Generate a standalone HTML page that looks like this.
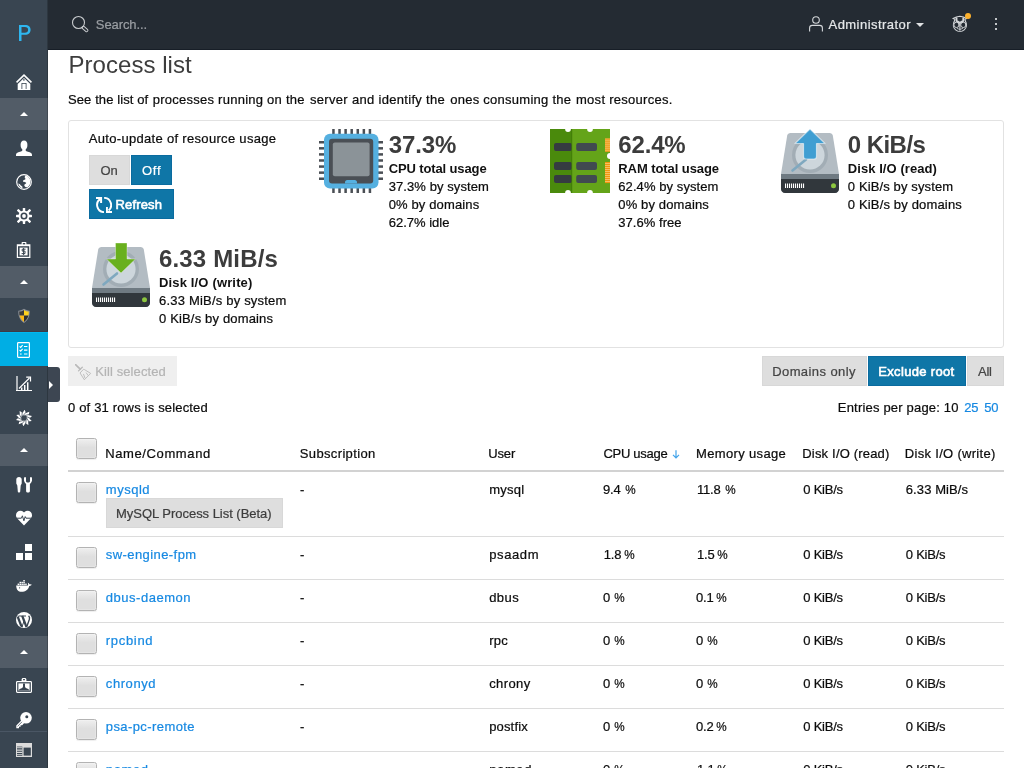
<!DOCTYPE html>
<html><head><meta charset="utf-8"><title>Process list</title><style>
*{margin:0;padding:0;box-sizing:border-box}
html,body{width:1024px;height:768px;overflow:hidden;background:#fff;font-family:"Liberation Sans",sans-serif;font-size:13px;color:#0c0c0c}
.a{position:absolute}
.t{position:absolute;white-space:nowrap;}
#tx{position:absolute;left:0;top:0;width:1024px;height:768px;will-change:transform;transform:translateZ(0)}
#side{position:absolute;left:0;top:0;width:48px;height:768px;background:#394551;}
.gh{position:absolute;left:0;width:48px;height:32px;background:#525c67}
.bg{position:absolute;height:30px;background:#dedede;border:1px solid #d8d8d8}
.bb{position:absolute;height:30px;background:#0f76a7;border:1px solid #0a6b9f}
#head{position:absolute;left:48px;top:0;width:976px;height:50px;background:#242b33;border-bottom:1px solid #171e27}
.cb{position:absolute;left:76px;width:21px;height:21px;border:1px solid #b3b3b3;border-radius:2.5px;background:linear-gradient(#efefef 0%,#dfdfdf 45%,#dfdfdf 100%);box-shadow:inset 0 0 0 1px rgba(255,255,255,.2),0 1px 1px rgba(0,0,0,.07)}
.rl{position:absolute;left:68px;width:936px;height:1px;background:#dcdcdc}
</style></head><body>
<div id="side"></div>
<div class="gh" style="top:98px"></div>
<svg style="position:absolute;left:20px;top:112px" width="8" height="4" viewBox="0 0 8 4" ><path d="M4 0L8 4H0Z" fill="#fff"/></svg>
<div class="gh" style="top:266px"></div>
<svg style="position:absolute;left:20px;top:280px" width="8" height="4" viewBox="0 0 8 4" ><path d="M4 0L8 4H0Z" fill="#fff"/></svg>
<div class="gh" style="top:434px"></div>
<svg style="position:absolute;left:20px;top:448px" width="8" height="4" viewBox="0 0 8 4" ><path d="M4 0L8 4H0Z" fill="#fff"/></svg>
<div class="gh" style="top:636px"></div>
<svg style="position:absolute;left:20px;top:650px" width="8" height="4" viewBox="0 0 8 4" ><path d="M4 0L8 4H0Z" fill="#fff"/></svg>
<div class="a" style="left:47px;top:0;width:1px;height:768px;background:rgba(0,0,0,.2)"></div>
<div class="a" style="left:0;top:331px;width:48px;height:1px;background:#3c3b46"></div>
<div class="a" style="left:0;top:332px;width:48px;height:34px;background:#00aee4;border-top:1px solid #00b8f0"></div>
<div class="a" style="left:0;top:731px;width:47px;height:1px;background:#4a5664"></div>
<svg style="position:absolute;left:16px;top:74px" width="16" height="16" viewBox="0 0 16 16" ><path d="M8 0L0 7.800L1.100 9L8 2.300L14.900 9L16 7.800Z" fill="#fff"/><path d="M8 3.900L1.700 10V16H14.300V10Z" fill="#fff"/><rect x="5.500" y="9" width="5" height="6" fill="#394551"/><rect x="6.300" y="9.800" width="3.400" height="5.200" fill="#fff"/><circle cx="7.900" cy="5.900" r=".8" fill="#394551"/></svg>
<svg style="position:absolute;left:16px;top:140px" width="16" height="16" viewBox="0 0 16 16" ><ellipse cx="8" cy="5" rx="3.4" ry="4.6" fill="#fff"/><path d="M6.3 8h3.4v2.2c0 .6 .5 1 1.4 1.3l2.6 .8c1.4 .4 2.3 1.3 2.3 2.6v1.1H0v-1.1c0-1.3 .9-2.2 2.3-2.6l2.6-.8c.9-.3 1.4-.7 1.400-1.300z" fill="#fff"/></svg>
<svg style="position:absolute;left:16px;top:174px" width="16" height="16" viewBox="0 0 16 16" ><circle cx="8" cy="8" r="7.3" fill="none" stroke="#fff" stroke-width="1.2"/><path d="M9.6 1.6c2.800 .7 4.800 3.200 4.800 6.200c0 2.300-1.200 4.300-3 5.400c-1.200 .2-2.400-.3-2.900-1.300c-.4-.9 0-1.700 .8-2c1-.4 1.200-1 .5-1.400c-.7-.4-2-.1-2.600-.900c-.5-.7-.1-1.500 .8-1.700c.9-.2 1.500-.5 1.400-1.200c-.1-.6-.7-.8-.7-1.500c0-.7 .4-1.200 .9-1.600z" fill="#fff"/><path d="M2.200 9.600c.9 .1 1.800 .5 2.200 1.300c.4 .8 1.400 .9 1.900 1.600c.4 .6 .2 1.400-.4 1.700c-1.800-.8-3.200-2.500-3.700-4.600z" fill="#fff"/></svg>
<svg style="position:absolute;left:16px;top:208px" width="16" height="16" viewBox="0 0 16 16" ><rect x="6.8" y="0" width="2.4" height="4" rx="0.6" fill="#fff" transform="rotate(0.0 8 8)"/><rect x="6.8" y="0" width="2.4" height="4" rx="0.6" fill="#fff" transform="rotate(90.0 8 8)"/><rect x="6.8" y="0" width="2.4" height="4" rx="0.6" fill="#fff" transform="rotate(180.0 8 8)"/><rect x="6.8" y="0" width="2.4" height="4" rx="0.6" fill="#fff" transform="rotate(270.0 8 8)"/><rect x="6.8" y="-1" width="2.4" height="5" rx="0.6" fill="#fff" transform="rotate(45.0 8 8)"/><rect x="6.8" y="-1" width="2.4" height="5" rx="0.6" fill="#fff" transform="rotate(135.0 8 8)"/><rect x="6.8" y="-1" width="2.4" height="5" rx="0.6" fill="#fff" transform="rotate(225.0 8 8)"/><rect x="6.8" y="-1" width="2.4" height="5" rx="0.6" fill="#fff" transform="rotate(315.0 8 8)"/><circle cx="8" cy="8" r="4.500" fill="none" stroke="#fff" stroke-width="2"/><circle cx="8" cy="8" r="1.900" fill="#fff"/></svg>
<svg style="position:absolute;left:16px;top:242px" width="16" height="16" viewBox="0 0 16 16" ><path d="M.8 2.200h4.800V.8a.8 .8 0 0 1 .8-.8h3.200a.8 .8 0 0 1 .8 .8v1.400H14.400V16H.8z" fill="#fff"/><rect x="6.800" y="1" width="2.400" height="1.400" fill="#394551"/><rect x="2" y="4.200" width="11.200" height="10.600" fill="#394551"/><rect x="3.600" y="5.600" width="8" height="7.800" fill="#fff"/><path d="M9.600 7.200H6.200v1.900h2.800v2.500H5.600M7.600 6v7" stroke="#394551" stroke-width="1" fill="none"/></svg>
<svg style="position:absolute;left:17px;top:308px" width="14" height="16" viewBox="0 0 14 16" ><path d="M7 .8C5.400 2 3.400 2.600 1.300 2.700C1 7.500 2.600 12 7 15C11.400 12 13 7.500 12.700 2.700C10.600 2.600 8.600 2 7 .8z" fill="#8a8f96"/><clipPath id="shc"><path d="M7 1.900C5.600 2.900 3.900 3.500 2.200 3.600C2 7.600 3.400 11.300 7 13.900C10.600 11.300 12 7.600 11.800 3.600C10.100 3.500 8.400 2.900 7 1.900z"/></clipPath><g clip-path="url(#shc)"><rect x="0" y="0" width="7" height="7.600" fill="#3b3b3b"/><rect x="7" y="0" width="7" height="7.600" fill="#ffd21c"/><rect x="0" y="7.600" width="7" height="9" fill="#fdb813"/><rect x="7" y="7.600" width="7" height="9" fill="#2e2e2e"/></g></svg>
<svg style="position:absolute;left:17px;top:342px" width="13" height="16" viewBox="0 0 13 16" ><rect x=".6" y=".6" width="11.800" height="14.800" rx=".8" fill="none" stroke="#fff" stroke-width="1.200"/><path d="M2.600 4.300l1.100 1.100l1.900-2.200M2.600 8l1.100 1.100l1.900-2.200" stroke="#fff" stroke-width="1.100" fill="none"/><path d="M7 4.500h3.400M7 8.200h3.400M7 12h3.400" stroke="#fff" stroke-width="1.200"/><rect x="3.200" y="11.400" width="1.300" height="1.300" fill="#fff"/></svg>
<svg style="position:absolute;left:16px;top:376px" width="16" height="16" viewBox="0 0 16 16" ><path d="M1 0v14.500M0 14.500h16" stroke="#fff" stroke-width="1.200" fill="none"/><path d="M3 12.500L13.500 2" stroke="#fff" stroke-width="1.200"/><path d="M10.200 1.200h4.300v4.300" stroke="#fff" stroke-width="1.200" fill="none"/><path d="M5.700 11.600v2.400M8.700 9v5M11.700 6.200v7.800" stroke="#fff" stroke-width="1.500"/></svg>
<svg style="position:absolute;left:16px;top:410px" width="16" height="16" viewBox="0 0 16 16" ><path d="M8.58,-0.28L10.02,2.99L13.34,1.64L12.58,5.14L16.05,5.99L13.39,8.38L15.70,11.11L12.14,11.47L12.40,15.04L9.31,13.24L7.42,16.28L5.98,13.01L2.66,14.36L3.42,10.86L-0.05,10.01L2.61,7.62L0.30,4.89L3.86,4.53L3.60,0.96L6.69,2.76Z" fill="#fff"/><path d="M10.60 8.00L13.04 11.94" stroke="#394551" stroke-width=".7"/><path d="M10.10 9.53L9.76 14.15" stroke="#394551" stroke-width=".7"/><path d="M8.80 10.47L5.81 14.01" stroke="#394551" stroke-width=".7"/><path d="M7.20 10.47L2.69 11.58" stroke="#394551" stroke-width=".7"/><path d="M5.90 9.53L1.60 7.78" stroke="#394551" stroke-width=".7"/><path d="M5.40 8.00L2.96 4.06" stroke="#394551" stroke-width=".7"/><path d="M5.90 6.47L6.24 1.85" stroke="#394551" stroke-width=".7"/><path d="M7.20 5.53L10.19 1.99" stroke="#394551" stroke-width=".7"/><path d="M8.80 5.53L13.31 4.42" stroke="#394551" stroke-width=".7"/><path d="M10.10 6.47L14.40 8.22" stroke="#394551" stroke-width=".7"/><circle cx="8" cy="8" r="2.800" fill="#394551"/></svg>
<svg style="position:absolute;left:16px;top:477px" width="16" height="16" viewBox="0 0 16 16" ><path d="M.300 2.600C.300 1 1.400 0 3 0S5.700 1 5.700 2.600V6.500L4.700 8.500L4.200 14.500C4.100 15.300 3.700 15.600 3 15.600S1.900 15.300 1.800 14.500L1.300 8.500L.300 6.500z" fill="#fff"/><path d="M8.200 .300C8.200 .300 10 .2 10 .300V4.200C10 5 10.800 5.600 12 5.600S14 5 14 4.200V.300C14 .2 15.800 .300 15.800 .300C16.100 1.500 16.200 3 15.800 4.300C15.500 5.500 14.800 6.400 13.900 7V14C13.900 15 13.100 15.600 12 15.600S10.100 15 10.100 14V7C9.200 6.400 8.500 5.500 8.200 4.300C7.800 3 7.900 1.500 8.200 .300z" fill="#fff"/></svg>
<svg style="position:absolute;left:16px;top:510px" width="16" height="16" viewBox="0 0 16 16" ><path d="M8 15.500L1.300 8.600C-.5 6.700-.4 3.700 1.300 2C3 .300 5.800 .300 7.500 2L8 2.600L8.500 2C10.200 .300 13 .300 14.700 2C16.400 3.700 16.500 6.700 14.700 8.600z" fill="#fff"/><path d="M0 8.200h5.400l1-2.400l1.500 5l1.300-4.200l.8 1.600H16" stroke="#394551" stroke-width="1" fill="none" stroke-linejoin="round"/></svg>
<svg style="position:absolute;left:16px;top:544px" width="16" height="16" viewBox="0 0 16 16" ><rect x="9" y="0" width="7" height="7" fill="#fff"/><rect x="0" y="9" width="7" height="7" fill="#fff"/><rect x="9" y="9" width="7" height="7" fill="#fff"/></svg>
<svg style="position:absolute;left:16px;top:580px" width="16" height="12" viewBox="0 0 16 12" ><path d="M.200 5.400H11.900C12.300 4.500 12.200 3.500 11.800 2.700C12.600 2.900 13.200 3.500 13.400 4.300C14.300 4.100 15.200 4.200 15.900 4.800C15.300 5.600 14.300 6 13.300 5.900C12.400 9.600 9.400 11.800 5.500 11.800C2.300 11.800 .300 9.700 .200 5.400z" fill="#fff"/><g fill="#fff"><rect x="1.600" y="3.600" width="1.500" height="1.400"/><rect x="3.500" y="3.600" width="1.500" height="1.400"/><rect x="5.400" y="3.600" width="1.500" height="1.400"/><rect x="7.300" y="3.600" width="1.500" height="1.400"/><rect x="9.200" y="3.600" width="1.500" height="1.400"/><rect x="3.500" y="1.800" width="1.500" height="1.400"/><rect x="5.400" y="1.800" width="1.500" height="1.400"/><rect x="7.300" y="1.800" width="1.500" height="1.400"/><rect x="7.300" y="0" width="1.500" height="1.400"/></g><circle cx="3.600" cy="7.800" r=".6" fill="#394551"/></svg>
<svg style="position:absolute;left:16px;top:612px" width="16" height="16" viewBox="0 0 16 16" ><circle cx="8" cy="8" r="8" fill="#fff"/><clipPath id="wpc"><circle cx="8" cy="8" r="7.600"/></clipPath><g clip-path="url(#wpc)" stroke="#394551" fill="none" stroke-linecap="butt"><path d="M1.600 4.400L6 15.800" stroke-width="2.300"/><path d="M5.900 15L8.300 8.400" stroke-width="1"/><path d="M6.200 3.900L10.800 15.800" stroke-width="2.300"/><path d="M10.700 15L13.400 7.200C13.900 5.600 13.400 4.600 12.600 3.800" stroke-width="1.400"/><path d="M2.400 4H10" stroke-width="1.200"/></g></svg>
<svg style="position:absolute;left:16px;top:678px" width="16" height="16" viewBox="0 0 16 16" ><path d="M5.600 3V1.600C5.600 .7 6.300 0 7.200 0h1.600c.9 0 1.600 .7 1.600 1.600V3H14.600C15.400 3 16 3.600 16 4.400V13.600C16 14.400 15.400 15 14.600 15H1.400C.6 15 0 14.400 0 13.600V4.400C0 3.600 .6 3 1.400 3z" fill="#fff"/><rect x="7" y="1.100" width="2" height="1.200" rx=".5" fill="#394551"/><rect x="1.200" y="4.200" width="13.600" height="9.600" fill="#394551"/><rect x="2.400" y="5.400" width="11.200" height="7.200" fill="#fff"/><path d="M7 5.400h2v3.200c0 .6 .3 1 .9 1.300l2.300 1.100c.5 .2 .8 .6 .8 1.100v.5H3v-.5c0-.5 .3-.9 .8-1.100l2.300-1.100c.6-.3 .9-.7 .9-1.300z" fill="#394551"/></svg>
<svg style="position:absolute;left:16px;top:712px" width="16" height="17" viewBox="0 0 16 17" ><circle cx="10" cy="5.800" r="5.800" fill="#fff"/><path d="M6.200 7.400L.300 13.600V16.200H3V14.800H4.600V13.200H6.200L8.600 10.600z" fill="#fff"/><circle cx="10.800" cy="4.800" r="1.500" fill="#394551"/><path d="M1.600 14.400L6 9.800" stroke="#394551" stroke-width=".7"/></svg>
<svg style="position:absolute;left:16px;top:743px" width="16" height="14" viewBox="0 0 16 14" ><rect x="0" y="0" width="16" height="14" fill="#dcdcdc"/><rect x="1" y="3.600" width="5.300" height="9.400" fill="#394551"/><rect x="7.600" y="4.600" width="7.200" height="8" fill="#394551"/><path d="M1 4.800h5.300M1 7.100h5.300M1 9.400h5.300M1 11.700h5.300" stroke="#dcdcdc" stroke-width="1.100"/></svg>
<svg style="position:absolute;left:18.8px;top:25px" width="12" height="16" viewBox="0 0 12 16" ><path fill-rule="evenodd" fill="#2eb6ef" d="M0 0H6.100C9.600 0 11.600 1.800 11.600 4.800C11.600 7.900 9.500 9.800 6.100 9.800H2.500V16H0zM2.500 2.100V7.700H5.800C8 7.700 9.100 6.700 9.100 4.800C9.100 3 8 2.100 5.800 2.100z"/></svg>
<div class="a" style="left:48px;top:367px;width:12px;height:35px;background:#3d4652;border-radius:0 3px 3px 0"></div>
<svg style="position:absolute;left:49px;top:381px" width="4" height="8" viewBox="0 0 4 8" ><path d="M0 0L4 4L0 8Z" fill="#fff"/></svg>
<div id="head"></div>
<svg style="position:absolute;left:71px;top:15px" width="18" height="18" viewBox="0 0 18 18" ><circle cx="7.500" cy="7.500" r="6" fill="none" stroke="#c8cbce" stroke-width="1.100"/><rect x="-3.400" y="-1.300" width="6.800" height="2.600" rx="1.300" fill="none" stroke="#c8cbce" stroke-width="1" transform="translate(14 14) rotate(42)"/></svg>
<svg style="position:absolute;left:809px;top:16px" width="14" height="16" viewBox="0 0 14 16" ><circle cx="7" cy="4" r="3.300" fill="none" stroke="#d4d7da" stroke-width="1.100"/><path d="M.6 15.500V12C.6 10.500 1.800 9.400 3.300 9.400H10.700C12.200 9.400 13.400 10.500 13.400 12V15.500" fill="none" stroke="#d4d7da" stroke-width="1.100"/></svg>
<svg style="position:absolute;left:916px;top:23px" width="8" height="4" viewBox="0 0 8 4" ><path d="M0 0H8L4 4Z" fill="#e0e2e4"/></svg>
<svg style="position:absolute;left:952px;top:15px" width="17" height="18" viewBox="0 0 17 18" ><g fill="none" stroke="#d2d5d8" stroke-width="1.100" stroke-linejoin="round" stroke-linecap="round"><path d="M1.100 3.500Q4.200 1.700 7.900 1.300Q11.600 1.700 14.700 3.500"/><path d="M1.100 3.500L2.900 4.300L2.300 6.400A6.600 6.600 0 1 0 13.500 6.400L12.900 4.300L14.700 3.500"/><path d="M4.500 3.100V5.900L7.900 7.900L11.300 5.900V3.100" stroke-width="1.900"/><circle cx="4.500" cy="9.900" r="2.650" stroke-width="1"/><circle cx="11.350" cy="9.900" r="2.650" stroke-width="1"/><path d="M7.900 7.700V15.200"/><path d="M5.200 13.600Q7.900 15.600 10.600 13.600" stroke-width=".8"/></g></svg>
<div class="a" style="left:965px;top:13px;width:6px;height:6px;border-radius:3px;background:#fbb02d"></div>
<div class="a" style="left:995px;top:18px;width:2px;height:2px;background:#c4c7ca"></div>
<div class="a" style="left:995px;top:23px;width:2px;height:2px;background:#c4c7ca"></div>
<div class="a" style="left:995px;top:28px;width:2px;height:2px;background:#c4c7ca"></div>
<div class="a" style="left:68px;top:120px;width:936px;height:228px;border:1px solid #e2e2e2;border-radius:3px"></div>
<div class="bg" style="left:89px;top:155px;width:41px"></div>
<div class="bb" style="left:131px;top:155px;width:41px"></div>
<div class="bb" style="left:89px;top:189px;width:85px"></div>
<svg style="position:absolute;left:96px;top:197px" width="16" height="16" viewBox="0 0 16 16" ><g fill="none" stroke="#fff" stroke-width="1.950"><path d="M4.600 1.900A7.100 7.100 0 0 0 8 15.100"/><path d="M8.100 .9A7.100 7.100 0 0 1 12.600 13.400"/></g><path d="M0 0H6.100V5.900H4.100V1.900H0z" fill="#fff"/><path d="M10 10H11.900V13.900H16V16H10z" fill="#fff"/></svg>
<div class="a" style="left:68px;top:356px;width:109px;height:30px;background:#efefef"></div>
<div class="bg" style="left:762px;top:356px;width:105px"></div>
<div class="bb" style="left:868px;top:356px;width:98px"></div>
<div class="bg" style="left:967px;top:356px;width:37px"></div>
<svg style="position:absolute;left:75px;top:364px" width="17" height="17" viewBox="0 0 17 17" ><g fill="none" stroke="#b9b9b9" stroke-linecap="round" stroke-linejoin="round"><path d="M.5 .6L5.200 5.200" stroke-width="1.700"/><path d="M3.500 6.900L7.300 3.300" stroke-width="1.300"/><path d="M5.300 8.700L8.200 5.600Q8.700 5.100 9.300 5.500L15.700 9.400L9.600 15.500z" stroke-width=".9"/><path d="M8.600 10.300L9.900 13.900M11.300 8.900L13 11.300" stroke-width=".9"/></g></svg>
<div class="a" style="left:68px;top:470px;width:936px;height:2px;background:#d2d2d2"></div>
<div class="rl" style="top:536px"></div>
<div class="rl" style="top:579px"></div>
<div class="rl" style="top:622px"></div>
<div class="rl" style="top:665px"></div>
<div class="rl" style="top:708px"></div>
<div class="rl" style="top:751px"></div>
<div class="cb" style="top:438px"></div>
<div class="cb" style="top:482px"></div>
<div class="cb" style="top:547px"></div>
<div class="cb" style="top:590px"></div>
<div class="cb" style="top:633px"></div>
<div class="cb" style="top:676px"></div>
<div class="cb" style="top:719px"></div>
<div class="cb" style="top:762px"></div>
<div class="bg" style="left:106px;top:498px;width:177px"></div>
<svg style="position:absolute;left:672px;top:450px" width="8" height="9" viewBox="0 0 8 9" ><path d="M4 .3V7.600M1 4.800L4 7.800L7 4.800" fill="none" stroke="#41a3ea" stroke-width="1.200"/></svg>
<svg style="position:absolute;left:319px;top:129px" width="64" height="64" viewBox="0 0 64 64" ><rect x="13.20" y="0" width="2.500" height="64" fill="#4a4f55"/><rect x="0" y="12.00" width="64" height="2.500" fill="#4a4f55"/><rect x="19.28" y="0" width="2.500" height="64" fill="#4a4f55"/><rect x="0" y="18.08" width="64" height="2.500" fill="#4a4f55"/><rect x="25.36" y="0" width="2.500" height="64" fill="#4a4f55"/><rect x="0" y="24.16" width="64" height="2.500" fill="#4a4f55"/><rect x="31.44" y="0" width="2.500" height="64" fill="#4a4f55"/><rect x="0" y="30.24" width="64" height="2.500" fill="#4a4f55"/><rect x="37.52" y="0" width="2.500" height="64" fill="#4a4f55"/><rect x="0" y="36.32" width="64" height="2.500" fill="#4a4f55"/><rect x="43.60" y="0" width="2.500" height="64" fill="#4a4f55"/><rect x="0" y="42.40" width="64" height="2.500" fill="#4a4f55"/><rect x="49.68" y="0" width="2.500" height="64" fill="#4a4f55"/><rect x="0" y="48.48" width="64" height="2.500" fill="#4a4f55"/><rect x="5" y="4.800" width="54.500" height="54.700" rx="6" fill="#55b0e0"/><rect x="10" y="9.800" width="44.200" height="44.600" rx="3" fill="#4a4f55"/><rect x="13.800" y="13.600" width="36.800" height="33.600" rx="2" fill="#8b9398"/><path d="M26 54.600V53.200C26 52 27 51 28.200 51H35.800C37 51 38 52 38 53.200V54.600z" fill="#55b0e0"/></svg>
<svg style="position:absolute;left:550px;top:129px" width="60" height="64" viewBox="0 0 60 64" ><rect x="0" y="0" width="60" height="64" fill="#64a419"/><rect x="55" y="9.500" width="5" height="13" fill="#f9c66b"/><rect x="55" y="33" width="5" height="20.500" fill="#f9c66b"/><rect x="4" y="14" width="17.500" height="8" rx="2" fill="#3a4046"/><rect x="26.200" y="14" width="20.800" height="8" rx="2" fill="#414a50"/><rect x="4" y="33" width="17.500" height="8" rx="2" fill="#3a4046"/><rect x="26.200" y="33" width="20.800" height="8" rx="2" fill="#414a50"/><rect x="4" y="46" width="17.500" height="8" rx="2" fill="#3a4046"/><rect x="26.200" y="46" width="20.800" height="8" rx="2" fill="#414a50"/><rect x="0" y="0" width="22" height="64" fill="#4a8a0c"/><rect x="4" y="14" width="18" height="8" rx="2" fill="#353b41"/><rect x="4" y="33" width="18" height="8" rx="2" fill="#353b41"/><rect x="4" y="46" width="18" height="8" rx="2" fill="#353b41"/><rect x="21.400" y="0" width=".8" height="64" fill="#3f7a08"/><rect x="55" y="9.60" width="5" height="1.100" fill="#f0960f"/><rect x="55" y="11.60" width="5" height="1.100" fill="#f0960f"/><rect x="55" y="13.60" width="5" height="1.100" fill="#f0960f"/><rect x="55" y="15.60" width="5" height="1.100" fill="#f0960f"/><rect x="55" y="17.60" width="5" height="1.100" fill="#f0960f"/><rect x="55" y="19.60" width="5" height="1.100" fill="#f0960f"/><rect x="55" y="21.60" width="5" height="1.100" fill="#f0960f"/><rect x="55" y="33.00" width="5" height="1.100" fill="#f0960f"/><rect x="55" y="35.00" width="5" height="1.100" fill="#f0960f"/><rect x="55" y="37.00" width="5" height="1.100" fill="#f0960f"/><rect x="55" y="39.00" width="5" height="1.100" fill="#f0960f"/><rect x="55" y="41.00" width="5" height="1.100" fill="#f0960f"/><rect x="55" y="43.00" width="5" height="1.100" fill="#f0960f"/><rect x="55" y="45.00" width="5" height="1.100" fill="#f0960f"/><rect x="55" y="47.00" width="5" height="1.100" fill="#f0960f"/><rect x="55" y="49.00" width="5" height="1.100" fill="#f0960f"/><rect x="55" y="51.00" width="5" height="1.100" fill="#f0960f"/><rect x="55" y="53.00" width="5" height="1.100" fill="#f0960f"/><circle cx="18" cy="0" r="2.900" fill="#fff"/><circle cx="40" cy="0" r="2.900" fill="#fff"/><circle cx="18" cy="64" r="2.900" fill="#fff"/><circle cx="40" cy="64" r="2.900" fill="#fff"/><circle cx="60" cy="27" r="3" fill="#fff"/></svg>
<svg style="position:absolute;left:781px;top:129px" width="58" height="64" viewBox="0 0 58 64" ><path d="M9.500 4C7.800 4 6.500 5 6.200 6.600L0 45V60C0 62.200 1.800 64 4 64H54C56.200 64 58 62.200 58 60V45L51.800 6.600C51.500 5 50.200 4 48.500 4z" fill="#b3bcc3"/><path d="M0 45H58V60C58 62.200 56.200 64 54 64H4C1.800 64 0 62.200 0 60z" fill="#31373c"/><rect x="0" y="45" width="58" height="5" fill="#6f7a82"/><circle cx="29" cy="26" r="18" fill="#a2adb5"/><circle cx="29" cy="26" r="14.600" fill="#cdd6dc"/><path d="M11.500 41.500L25 30.500" stroke="#7fa8bf" stroke-width="2.600" stroke-linecap="round"/><rect x="4.0" y="54.500" width="1.100" height="4.500" fill="#fff"/><rect x="6.0" y="54.500" width="1.100" height="4.500" fill="#fff"/><rect x="8.0" y="54.500" width="1.100" height="4.500" fill="#fff"/><rect x="10.0" y="54.500" width="1.100" height="4.500" fill="#fff"/><rect x="12.0" y="54.500" width="1.100" height="4.500" fill="#fff"/><rect x="14.0" y="54.500" width="1.100" height="4.500" fill="#fff"/><rect x="16.0" y="54.500" width="1.100" height="4.500" fill="#fff"/><rect x="18.0" y="54.500" width="1.100" height="4.500" fill="#fff"/><rect x="20.0" y="54.500" width="1.100" height="4.500" fill="#fff"/><rect x="22.0" y="54.500" width="1.100" height="4.500" fill="#fff"/><circle cx="52.500" cy="56.700" r="2.500" fill="#8cc63f"/><path d="M29 0L44 14.500H35.500V27.500C35.500 29.200 34.700 30 33 30H25C23.300 30 22.500 29.200 22.500 27.500V14.500H14z" fill="#3f9ed2" stroke="rgba(255,255,255,.55)" stroke-width="1.200" stroke-linejoin="round"/></svg>
<svg style="position:absolute;left:92px;top:243px" width="58" height="64" viewBox="0 0 58 64" ><path d="M9.500 4C7.800 4 6.500 5 6.200 6.600L0 45V60C0 62.200 1.800 64 4 64H54C56.200 64 58 62.200 58 60V45L51.800 6.600C51.500 5 50.200 4 48.500 4z" fill="#b3bcc3"/><path d="M0 45H58V60C58 62.200 56.200 64 54 64H4C1.800 64 0 62.200 0 60z" fill="#31373c"/><rect x="0" y="45" width="58" height="5" fill="#6f7a82"/><circle cx="29" cy="26" r="18" fill="#a2adb5"/><circle cx="29" cy="26" r="14.600" fill="#cdd6dc"/><path d="M11.500 41.500L25 30.500" stroke="#7fa8bf" stroke-width="2.600" stroke-linecap="round"/><rect x="4.0" y="54.500" width="1.100" height="4.500" fill="#fff"/><rect x="6.0" y="54.500" width="1.100" height="4.500" fill="#fff"/><rect x="8.0" y="54.500" width="1.100" height="4.500" fill="#fff"/><rect x="10.0" y="54.500" width="1.100" height="4.500" fill="#fff"/><rect x="12.0" y="54.500" width="1.100" height="4.500" fill="#fff"/><rect x="14.0" y="54.500" width="1.100" height="4.500" fill="#fff"/><rect x="16.0" y="54.500" width="1.100" height="4.500" fill="#fff"/><rect x="18.0" y="54.500" width="1.100" height="4.500" fill="#fff"/><rect x="20.0" y="54.500" width="1.100" height="4.500" fill="#fff"/><rect x="22.0" y="54.500" width="1.100" height="4.500" fill="#fff"/><circle cx="52.500" cy="56.700" r="2.500" fill="#8cc63f"/><path d="M23.500 0H35V16H43.500L29 30L14.500 16H23.500z" fill="#69b01e" stroke="rgba(255,255,255,.35)" stroke-width="1" stroke-linejoin="round"/></svg>
<div id="tx">
<span class="t" style="left:95.80px;top:16px;font-size:13px;line-height:18px;color:#9a9ea3;-webkit-text-stroke:.22px;letter-spacing:-0.089px;">Search...</span>
<span class="t" style="left:828.50px;top:16px;font-size:13px;line-height:18px;color:#e6e8ea;-webkit-text-stroke:.22px;letter-spacing:0.463px;">Administrator</span>
<span class="t" style="left:68.50px;top:48px;font-size:24px;line-height:34px;color:#3d3d3d;letter-spacing:0.043px;">Process list</span>
<span class="t" style="left:68.00px;top:91px;font-size:13px;line-height:18px;color:#0c0c0c;-webkit-text-stroke:.22px;letter-spacing:0.096px;">See the list of</span>
<span class="t" style="left:152.75px;top:91px;font-size:13px;line-height:18px;color:#0c0c0c;-webkit-text-stroke:.22px;letter-spacing:0.250px;">processes running on the</span>
<span class="t" style="left:310.00px;top:91px;font-size:13px;line-height:18px;color:#0c0c0c;-webkit-text-stroke:.22px;letter-spacing:0.310px;">server and identify the</span>
<span class="t" style="left:450.25px;top:91px;font-size:13px;line-height:18px;color:#0c0c0c;-webkit-text-stroke:.22px;letter-spacing:0.257px;">ones consuming the</span>
<span class="t" style="left:576.00px;top:91px;font-size:13px;line-height:18px;color:#0c0c0c;-webkit-text-stroke:.22px;letter-spacing:0.274px;">most resources.</span>
<span class="t" style="left:88.80px;top:130px;font-size:13px;line-height:18px;color:#0c0c0c;-webkit-text-stroke:.22px;letter-spacing:0.311px;">Auto-update of resource usage</span>
<span class="t" style="left:100.50px;top:162px;font-size:13px;line-height:18px;color:#444;-webkit-text-stroke:.22px;letter-spacing:-0.112px;">On</span>
<span class="t" style="left:142.00px;top:162px;font-size:13px;line-height:18px;color:#fff;-webkit-text-stroke:.22px;letter-spacing:0.756px;">Off</span>
<span class="t" style="left:115.50px;top:196px;font-size:13px;line-height:18px;color:#fff;-webkit-text-stroke:.6px;letter-spacing:0.152px;">Refresh</span>
<span class="t" style="left:388.70px;top:128px;font-size:24px;line-height:34px;color:#3c3c3c;font-weight:700;letter-spacing:-0.128px;">37.3%</span>
<span class="t" style="left:388.70px;top:160px;font-size:13px;line-height:18px;color:#111;font-weight:700;letter-spacing:-0.125px;">CPU total usage</span>
<span class="t" style="left:388.70px;top:178px;font-size:13px;line-height:18px;color:#0c0c0c;-webkit-text-stroke:.22px;letter-spacing:0.082px;">37.3% by system</span>
<span class="t" style="left:388.70px;top:196px;font-size:13px;line-height:18px;color:#0c0c0c;-webkit-text-stroke:.22px;letter-spacing:0.135px;">0% by domains</span>
<span class="t" style="left:388.70px;top:214px;font-size:13px;line-height:18px;color:#0c0c0c;-webkit-text-stroke:.22px;">62.7% idle</span>
<span class="t" style="left:618.30px;top:128px;font-size:24px;line-height:34px;color:#3c3c3c;font-weight:700;letter-spacing:-0.178px;">62.4%</span>
<span class="t" style="left:618.30px;top:160px;font-size:13px;line-height:18px;color:#111;font-weight:700;letter-spacing:-0.079px;">RAM total usage</span>
<span class="t" style="left:618.30px;top:178px;font-size:13px;line-height:18px;color:#0c0c0c;-webkit-text-stroke:.22px;letter-spacing:0.082px;">62.4% by system</span>
<span class="t" style="left:618.30px;top:196px;font-size:13px;line-height:18px;color:#0c0c0c;-webkit-text-stroke:.22px;letter-spacing:0.135px;">0% by domains</span>
<span class="t" style="left:618.30px;top:214px;font-size:13px;line-height:18px;color:#0c0c0c;-webkit-text-stroke:.22px;letter-spacing:0.040px;">37.6% free</span>
<span class="t" style="left:847.80px;top:128px;font-size:24px;line-height:34px;color:#3c3c3c;font-weight:700;letter-spacing:-0.553px;">0 KiB/s</span>
<span class="t" style="left:847.80px;top:160px;font-size:13px;line-height:18px;color:#111;font-weight:700;letter-spacing:0.064px;">Disk I/O (read)</span>
<span class="t" style="left:847.80px;top:178px;font-size:13px;line-height:18px;color:#0c0c0c;-webkit-text-stroke:.22px;letter-spacing:0.126px;">0 KiB/s by system</span>
<span class="t" style="left:847.80px;top:196px;font-size:13px;line-height:18px;color:#0c0c0c;-webkit-text-stroke:.22px;letter-spacing:0.160px;">0 KiB/s by domains</span>
<span class="t" style="left:159.00px;top:242px;font-size:24px;line-height:34px;color:#3c3c3c;font-weight:700;letter-spacing:0.162px;">6.33 MiB/s</span>
<span class="t" style="left:159.00px;top:274px;font-size:13px;line-height:18px;color:#111;font-weight:700;letter-spacing:0.154px;">Disk I/O (write)</span>
<span class="t" style="left:159.00px;top:292px;font-size:13px;line-height:18px;color:#0c0c0c;-webkit-text-stroke:.22px;letter-spacing:0.200px;">6.33 MiB/s by system</span>
<span class="t" style="left:159.00px;top:310px;font-size:13px;line-height:18px;color:#0c0c0c;-webkit-text-stroke:.22px;letter-spacing:0.160px;">0 KiB/s by domains</span>
<span class="t" style="left:95.30px;top:363px;font-size:13px;line-height:18px;color:#b4b4b4;-webkit-text-stroke:.22px;letter-spacing:0.089px;">Kill selected</span>
<span class="t" style="left:772.20px;top:363px;font-size:13px;line-height:18px;color:#444;-webkit-text-stroke:.22px;letter-spacing:0.413px;">Domains only</span>
<span class="t" style="left:878.30px;top:363px;font-size:13px;line-height:18px;color:#fff;-webkit-text-stroke:.6px;letter-spacing:0.323px;">Exclude root</span>
<span class="t" style="left:978.00px;top:363px;font-size:13px;line-height:18px;color:#444;-webkit-text-stroke:.22px;letter-spacing:-0.280px;">All</span>
<span class="t" style="left:68.00px;top:399px;font-size:13px;line-height:18px;color:#0c0c0c;-webkit-text-stroke:.22px;letter-spacing:0.169px;">0 of 31 rows is selected</span>
<span class="t" style="left:837.80px;top:399px;font-size:13px;line-height:18px;color:#0c0c0c;-webkit-text-stroke:.22px;letter-spacing:0.192px;">Entries per page: 10</span>
<span class="t" style="left:964.20px;top:399px;font-size:13px;line-height:18px;color:#1789e2;-webkit-text-stroke:.22px;letter-spacing:-0.230px;">25</span>
<span class="t" style="left:984.20px;top:399px;font-size:13px;line-height:18px;color:#1789e2;-webkit-text-stroke:.22px;letter-spacing:-0.230px;">50</span>
<span class="t" style="left:105.20px;top:445px;font-size:13px;line-height:18px;color:#0c0c0c;-webkit-text-stroke:.22px;letter-spacing:0.616px;">Name/Command</span>
<span class="t" style="left:299.80px;top:445px;font-size:13px;line-height:18px;color:#0c0c0c;-webkit-text-stroke:.22px;letter-spacing:0.354px;">Subscription</span>
<span class="t" style="left:488.20px;top:445px;font-size:13px;line-height:18px;color:#0c0c0c;-webkit-text-stroke:.22px;letter-spacing:-0.106px;">User</span>
<span class="t" style="left:603.40px;top:445px;font-size:13px;line-height:18px;color:#0c0c0c;-webkit-text-stroke:.22px;letter-spacing:-0.281px;">CPU usage</span>
<span class="t" style="left:696.00px;top:445px;font-size:13px;line-height:18px;color:#0c0c0c;-webkit-text-stroke:.22px;letter-spacing:0.350px;">Memory usage</span>
<span class="t" style="left:802.30px;top:445px;font-size:13px;line-height:18px;color:#0c0c0c;-webkit-text-stroke:.22px;letter-spacing:0.180px;">Disk I/O (read)</span>
<span class="t" style="left:904.80px;top:445px;font-size:13px;line-height:18px;color:#0c0c0c;-webkit-text-stroke:.22px;letter-spacing:0.306px;">Disk I/O (write)</span>
<span class="t" style="left:105.80px;top:481px;font-size:13px;line-height:18px;color:#1789e2;-webkit-text-stroke:.22px;letter-spacing:0.511px;">mysqld</span>
<span class="t" style="left:300.00px;top:481px;font-size:13px;line-height:18px;color:#0c0c0c;-webkit-text-stroke:.22px;">-</span>
<span class="t" style="left:489.20px;top:481px;font-size:13px;line-height:18px;color:#0c0c0c;-webkit-text-stroke:.22px;letter-spacing:0.235px;">mysql</span>
<span class="t" style="left:603.10px;top:481px;font-size:13px;line-height:18px;color:#0c0c0c;-webkit-text-stroke:.22px;letter-spacing:-0.250px;">9.4</span>
<span class="t" style="left:623.50px;top:481px;font-size:13px;line-height:18px;color:#0c0c0c;-webkit-text-stroke:.22px;transform:scaleX(0.9);transform-origin:100% 50%;">%</span>
<span class="t" style="left:697.10px;top:481px;font-size:13px;line-height:18px;color:#0c0c0c;-webkit-text-stroke:.22px;letter-spacing:-0.250px;">11.8</span>
<span class="t" style="left:723.50px;top:481px;font-size:13px;line-height:18px;color:#0c0c0c;-webkit-text-stroke:.22px;transform:scaleX(0.9);transform-origin:100% 50%;">%</span>
<span class="t" style="left:803.30px;top:481px;font-size:13px;line-height:18px;color:#0c0c0c;-webkit-text-stroke:.22px;letter-spacing:-0.231px;">0 KiB/s</span>
<span class="t" style="left:905.80px;top:481px;font-size:13px;line-height:18px;color:#0c0c0c;-webkit-text-stroke:.22px;letter-spacing:0.087px;">6.33 MiB/s</span>
<span class="t" style="left:105.80px;top:546px;font-size:13px;line-height:18px;color:#1789e2;-webkit-text-stroke:.22px;letter-spacing:0.423px;">sw-engine-fpm</span>
<span class="t" style="left:300.00px;top:546px;font-size:13px;line-height:18px;color:#0c0c0c;-webkit-text-stroke:.22px;">-</span>
<span class="t" style="left:489.20px;top:546px;font-size:13px;line-height:18px;color:#0c0c0c;-webkit-text-stroke:.22px;letter-spacing:0.616px;">psaadm</span>
<span class="t" style="left:603.80px;top:546px;font-size:13px;line-height:18px;color:#0c0c0c;-webkit-text-stroke:.22px;letter-spacing:-0.250px;">1.8</span>
<span class="t" style="left:623.20px;top:546px;font-size:13px;line-height:18px;color:#0c0c0c;-webkit-text-stroke:.22px;transform:scaleX(0.9);transform-origin:100% 50%;">%</span>
<span class="t" style="left:697.10px;top:546px;font-size:13px;line-height:18px;color:#0c0c0c;-webkit-text-stroke:.22px;letter-spacing:-0.250px;">1.5</span>
<span class="t" style="left:716.00px;top:546px;font-size:13px;line-height:18px;color:#0c0c0c;-webkit-text-stroke:.22px;transform:scaleX(0.9);transform-origin:100% 50%;">%</span>
<span class="t" style="left:803.30px;top:546px;font-size:13px;line-height:18px;color:#0c0c0c;-webkit-text-stroke:.22px;letter-spacing:-0.231px;">0 KiB/s</span>
<span class="t" style="left:905.80px;top:546px;font-size:13px;line-height:18px;color:#0c0c0c;-webkit-text-stroke:.22px;letter-spacing:-0.231px;">0 KiB/s</span>
<span class="t" style="left:105.80px;top:589px;font-size:13px;line-height:18px;color:#1789e2;-webkit-text-stroke:.22px;letter-spacing:0.523px;">dbus-daemon</span>
<span class="t" style="left:300.00px;top:589px;font-size:13px;line-height:18px;color:#0c0c0c;-webkit-text-stroke:.22px;">-</span>
<span class="t" style="left:489.20px;top:589px;font-size:13px;line-height:18px;color:#0c0c0c;-webkit-text-stroke:.22px;letter-spacing:0.437px;">dbus</span>
<span class="t" style="left:603.10px;top:589px;font-size:13px;line-height:18px;color:#0c0c0c;-webkit-text-stroke:.22px;letter-spacing:-0.250px;">0</span>
<span class="t" style="left:612.50px;top:589px;font-size:13px;line-height:18px;color:#0c0c0c;-webkit-text-stroke:.22px;transform:scaleX(0.9);transform-origin:100% 50%;">%</span>
<span class="t" style="left:696.10px;top:589px;font-size:13px;line-height:18px;color:#0c0c0c;-webkit-text-stroke:.22px;letter-spacing:-0.250px;">0.1</span>
<span class="t" style="left:715.00px;top:589px;font-size:13px;line-height:18px;color:#0c0c0c;-webkit-text-stroke:.22px;transform:scaleX(0.9);transform-origin:100% 50%;">%</span>
<span class="t" style="left:803.30px;top:589px;font-size:13px;line-height:18px;color:#0c0c0c;-webkit-text-stroke:.22px;letter-spacing:-0.231px;">0 KiB/s</span>
<span class="t" style="left:905.80px;top:589px;font-size:13px;line-height:18px;color:#0c0c0c;-webkit-text-stroke:.22px;letter-spacing:-0.231px;">0 KiB/s</span>
<span class="t" style="left:105.80px;top:632px;font-size:13px;line-height:18px;color:#1789e2;-webkit-text-stroke:.22px;letter-spacing:0.682px;">rpcbind</span>
<span class="t" style="left:300.00px;top:632px;font-size:13px;line-height:18px;color:#0c0c0c;-webkit-text-stroke:.22px;">-</span>
<span class="t" style="left:489.20px;top:632px;font-size:13px;line-height:18px;color:#0c0c0c;-webkit-text-stroke:.22px;letter-spacing:0.220px;">rpc</span>
<span class="t" style="left:603.10px;top:632px;font-size:13px;line-height:18px;color:#0c0c0c;-webkit-text-stroke:.22px;letter-spacing:-0.250px;">0</span>
<span class="t" style="left:612.50px;top:632px;font-size:13px;line-height:18px;color:#0c0c0c;-webkit-text-stroke:.22px;transform:scaleX(0.9);transform-origin:100% 50%;">%</span>
<span class="t" style="left:696.10px;top:632px;font-size:13px;line-height:18px;color:#0c0c0c;-webkit-text-stroke:.22px;letter-spacing:-0.250px;">0</span>
<span class="t" style="left:705.50px;top:632px;font-size:13px;line-height:18px;color:#0c0c0c;-webkit-text-stroke:.22px;transform:scaleX(0.9);transform-origin:100% 50%;">%</span>
<span class="t" style="left:803.30px;top:632px;font-size:13px;line-height:18px;color:#0c0c0c;-webkit-text-stroke:.22px;letter-spacing:-0.231px;">0 KiB/s</span>
<span class="t" style="left:905.80px;top:632px;font-size:13px;line-height:18px;color:#0c0c0c;-webkit-text-stroke:.22px;letter-spacing:-0.231px;">0 KiB/s</span>
<span class="t" style="left:105.80px;top:675px;font-size:13px;line-height:18px;color:#1789e2;-webkit-text-stroke:.22px;letter-spacing:0.580px;">chronyd</span>
<span class="t" style="left:300.00px;top:675px;font-size:13px;line-height:18px;color:#0c0c0c;-webkit-text-stroke:.22px;">-</span>
<span class="t" style="left:489.20px;top:675px;font-size:13px;line-height:18px;color:#0c0c0c;-webkit-text-stroke:.22px;letter-spacing:0.396px;">chrony</span>
<span class="t" style="left:603.10px;top:675px;font-size:13px;line-height:18px;color:#0c0c0c;-webkit-text-stroke:.22px;letter-spacing:-0.250px;">0</span>
<span class="t" style="left:612.50px;top:675px;font-size:13px;line-height:18px;color:#0c0c0c;-webkit-text-stroke:.22px;transform:scaleX(0.9);transform-origin:100% 50%;">%</span>
<span class="t" style="left:696.10px;top:675px;font-size:13px;line-height:18px;color:#0c0c0c;-webkit-text-stroke:.22px;letter-spacing:-0.250px;">0</span>
<span class="t" style="left:705.50px;top:675px;font-size:13px;line-height:18px;color:#0c0c0c;-webkit-text-stroke:.22px;transform:scaleX(0.9);transform-origin:100% 50%;">%</span>
<span class="t" style="left:803.30px;top:675px;font-size:13px;line-height:18px;color:#0c0c0c;-webkit-text-stroke:.22px;letter-spacing:-0.231px;">0 KiB/s</span>
<span class="t" style="left:905.80px;top:675px;font-size:13px;line-height:18px;color:#0c0c0c;-webkit-text-stroke:.22px;letter-spacing:-0.231px;">0 KiB/s</span>
<span class="t" style="left:105.80px;top:718px;font-size:13px;line-height:18px;color:#1789e2;-webkit-text-stroke:.22px;letter-spacing:0.410px;">psa-pc-remote</span>
<span class="t" style="left:300.00px;top:718px;font-size:13px;line-height:18px;color:#0c0c0c;-webkit-text-stroke:.22px;">-</span>
<span class="t" style="left:489.20px;top:718px;font-size:13px;line-height:18px;color:#0c0c0c;-webkit-text-stroke:.22px;letter-spacing:0.155px;">postfix</span>
<span class="t" style="left:603.10px;top:718px;font-size:13px;line-height:18px;color:#0c0c0c;-webkit-text-stroke:.22px;letter-spacing:-0.250px;">0</span>
<span class="t" style="left:612.50px;top:718px;font-size:13px;line-height:18px;color:#0c0c0c;-webkit-text-stroke:.22px;transform:scaleX(0.9);transform-origin:100% 50%;">%</span>
<span class="t" style="left:696.10px;top:718px;font-size:13px;line-height:18px;color:#0c0c0c;-webkit-text-stroke:.22px;letter-spacing:-0.250px;">0.2</span>
<span class="t" style="left:715.00px;top:718px;font-size:13px;line-height:18px;color:#0c0c0c;-webkit-text-stroke:.22px;transform:scaleX(0.9);transform-origin:100% 50%;">%</span>
<span class="t" style="left:803.30px;top:718px;font-size:13px;line-height:18px;color:#0c0c0c;-webkit-text-stroke:.22px;letter-spacing:-0.231px;">0 KiB/s</span>
<span class="t" style="left:905.80px;top:718px;font-size:13px;line-height:18px;color:#0c0c0c;-webkit-text-stroke:.22px;letter-spacing:-0.231px;">0 KiB/s</span>
<span class="t" style="left:105.80px;top:761px;font-size:13px;line-height:18px;color:#1789e2;-webkit-text-stroke:.22px;letter-spacing:0.620px;">named</span>
<span class="t" style="left:300.00px;top:761px;font-size:13px;line-height:18px;color:#0c0c0c;-webkit-text-stroke:.22px;">-</span>
<span class="t" style="left:489.20px;top:761px;font-size:13px;line-height:18px;color:#0c0c0c;-webkit-text-stroke:.22px;letter-spacing:0.620px;">named</span>
<span class="t" style="left:603.10px;top:761px;font-size:13px;line-height:18px;color:#0c0c0c;-webkit-text-stroke:.22px;letter-spacing:-0.250px;">0</span>
<span class="t" style="left:612.50px;top:761px;font-size:13px;line-height:18px;color:#0c0c0c;-webkit-text-stroke:.22px;transform:scaleX(0.9);transform-origin:100% 50%;">%</span>
<span class="t" style="left:697.10px;top:761px;font-size:13px;line-height:18px;color:#0c0c0c;-webkit-text-stroke:.22px;letter-spacing:-0.250px;">1.1</span>
<span class="t" style="left:716.00px;top:761px;font-size:13px;line-height:18px;color:#0c0c0c;-webkit-text-stroke:.22px;transform:scaleX(0.9);transform-origin:100% 50%;">%</span>
<span class="t" style="left:803.30px;top:761px;font-size:13px;line-height:18px;color:#0c0c0c;-webkit-text-stroke:.22px;letter-spacing:-0.231px;">0 KiB/s</span>
<span class="t" style="left:905.80px;top:761px;font-size:13px;line-height:18px;color:#0c0c0c;-webkit-text-stroke:.22px;letter-spacing:-0.231px;">0 KiB/s</span>
<span class="t" style="left:116.00px;top:505px;font-size:13px;line-height:18px;color:#3d3d3d;-webkit-text-stroke:.22px;letter-spacing:-0.027px;">MySQL Process List (Beta)</span>
</div>
</body></html>
